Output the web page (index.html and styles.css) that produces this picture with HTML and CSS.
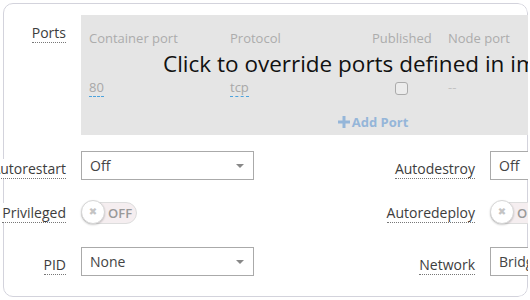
FILE: index.html
```html
<!DOCTYPE html>
<html>
<head>
<meta charset="utf-8">
<link rel="stylesheet" href="styles.css">
</head>
<body>
<div class="card">
  <div class="ports-row">
    <div class="label-col"><span class="label">Ports</span></div>
    <div class="ports-box">
      <div class="ports-grid">
        <div class="head">Container port</div>
        <div class="head">Protocol</div>
        <div class="head">Published</div>
        <div class="head">Node port</div>
        <div class="val"><span class="editable">80</span></div>
        <div class="val"><span class="editable">tcp</span></div>
        <div class="val"><span class="checkbox"></span></div>
        <div class="val dash">--</div>
      </div>
      <div class="add-port">
        <svg class="plus" width="12" height="12" viewBox="0 0 12 12"><path d="M4.5 0h3v4.5H12v3H7.5V12h-3V7.5H0v-3h4.5z" fill="currentColor"/></svg>
        <span>Add Port</span>
      </div>
      <div class="override">Click to override ports defined in image</div>
    </div>
  </div>
  <div class="form-grid">
    <div class="label-col"><span class="label">Autorestart</span></div>
    <div class="select"><span>Off</span><span class="caret"></span></div>
    <div class="label-col"><span class="label">Autodestroy</span></div>
    <div class="select"><span>Off</span><span class="caret"></span></div>

    <div class="label-col toggle-lbl"><span class="label">Privileged</span></div>
    <div class="toggle-cell"><div class="toggle"><span class="knob">&#x2716;</span><span class="off">OFF</span></div></div>
    <div class="label-col toggle-lbl"><span class="label">Autoredeploy</span></div>
    <div class="toggle-cell"><div class="toggle"><span class="knob">&#x2716;</span><span class="off">OFF</span></div></div>

    <div class="label-col"><span class="label">PID</span></div>
    <div class="select"><span>None</span><span class="caret"></span></div>
    <div class="label-col"><span class="label">Network</span></div>
    <div class="select"><span>Bridge</span><span class="caret"></span></div>
  </div>
</div>
</body>
</html>
```
FILE: styles.css
```css
html, body {
  margin: 0;
  padding: 0;
  background: #fff;
  font-family: "Open Sans", "Liberation Sans", sans-serif;
}
.card {
  margin: 3px 0 0 3px;
  width: 525px;
  height: 294px;
  box-sizing: border-box;
  border: 1px solid #d3d3dc;
  border-radius: 10px;
  padding-top: 11px;
  background: #fff;
  clip-path: inset(0 0 0 -10px round 10px);
}
.ports-row {
  display: flex;
  width: 661px;
}
.ports-row .label-col {
  width: 77px;
  flex: none;
}
.label-col {
  box-sizing: border-box;
  padding-right: 15px;
  text-align: right;
  white-space: nowrap;
  direction: rtl;
}
.label {
  display: inline-block;
  direction: ltr;
  margin-top: 8px;
  font-size: 14px;
  line-height: 19px;
  color: #3d3d3d;
  border-bottom: 1px dotted #777;
  background: #fff;
}
.ports-box {
  position: relative;
  width: 584px;
  height: 120px;
  flex: none;
  box-sizing: border-box;
  background: #e5e5e5;
  padding: 14px 8px 0;
}
.ports-grid {
  display: grid;
  grid-template-columns: 141px 142px 76px 100px;
  row-gap: 31px;
  font-size: 13px;
  line-height: 18px;
}
.head {
  color: #acacac;
}
.val {
  color: #a8a8a8;
  height: 19px;
}
.editable {
  display: inline-block;
  border-bottom: 1px dashed #4da3dd;
}
.checkbox {
  display: inline-block;
  width: 11px;
  height: 11px;
  margin: 4px 0 0 23px;
  border: 1px solid #ababab;
  border-radius: 3px;
  background: #ececec;
}
.dash {
  color: #c2c2c2;
}
.add-port {
  display: flex;
  justify-content: center;
  align-items: center;
  gap: 2px;
  margin-top: 16px;
  font-size: 13px;
  line-height: 18px;
  font-weight: bold;
  color: #95b6d9;
}
.plus {
  margin-top: -1px;
}
.override {
  position: absolute;
  left: 82px;
  top: 34px;
  white-space: nowrap;
  font-size: 22.5px;
  line-height: 30px;
  color: #111;
}
.form-grid {
  display: grid;
  grid-template-columns: 77px 173px 236px 173px;
  grid-auto-rows: 29px;
  row-gap: 19px;
  margin-top: 16px;
  width: 659px;
}
.toggle-lbl .label {
  margin-top: 4px;
}
.select {
  display: flex;
  align-items: center;
  justify-content: space-between;
  box-sizing: border-box;
  height: 29px;
  border: 1px solid #aaa;
  padding: 0 8px;
  font-size: 14px;
  line-height: 27px;
  color: #444;
  background: #fff;
}
.caret {
  width: 0;
  height: 0;
  border-left: 4px solid transparent;
  border-right: 4px solid transparent;
  border-top: 4px solid #888;
  margin-right: 1px;
}
.toggle-cell {
  padding-top: 3px;
}
.toggle {
  display: flex;
  align-items: center;
  box-sizing: border-box;
  width: 56px;
  height: 22px;
  border: 1px solid #ddd;
  border-radius: 11px;
  background: #f5eef0;
  position: relative;
}
.knob {
  position: absolute;
  left: -1px;
  top: -3px;
  width: 24px;
  height: 24px;
  box-sizing: border-box;
  border-radius: 50%;
  background: #fff;
  border: 1px solid #d6d6d6;
  box-shadow: 0 1px 2px rgba(0,0,0,0.2);
  color: #c4c4c4;
  font-size: 10px;
  line-height: 22px;
  text-align: center;
  font-family: "DejaVu Sans", sans-serif;
}
.off {
  margin-left: 26px;
  font-size: 13px;
  font-weight: 600;
  color: #999;
  line-height: 20px;
}
```
